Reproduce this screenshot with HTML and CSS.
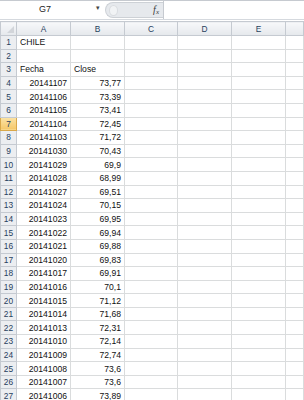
FILE: index.html
```html
<!DOCTYPE html>
<html lang="es">
<head>
    <meta charset="UTF-8">
    <title>Libro1 - CHILE</title>
    <link rel="stylesheet" href="styles.css">
</head>
<body>
    <div class="formula-bar">
        <div class="name-box">
            <span class="cell-ref">G7</span>
            <span class="drop">&#9662;</span>
        </div>
        <div class="fx-zone">
            <span class="grip"></span>
            <span class="fx"><i>f</i><sub>x</sub></span>
        </div>
        <div class="formula-input"></div>
    </div>

    <table class="sheet">
        <colgroup>
            <col class="c-head">
            <col class="c-a">
            <col class="c-b">
            <col class="c-c">
            <col class="c-d">
            <col class="c-e">
            <col>
        </colgroup>
        <thead>
            <tr>
                <th class="corner"><span class="tri"></span></th>
                <th>A</th><th>B</th><th>C</th><th>D</th><th>E</th><th></th>
            </tr>
        </thead>
        <tbody id="rows"></tbody>
    </table>

    <script>
        const data = [
            ['CHILE', ''],
            ['', ''],
            ['Fecha', 'Close'],
            ['20141107', '73,77'],
            ['20141106', '73,39'],
            ['20141105', '73,41'],
            ['20141104', '72,45'],
            ['20141103', '71,72'],
            ['20141030', '70,43'],
            ['20141029', '69,9'],
            ['20141028', '68,99'],
            ['20141027', '69,51'],
            ['20141024', '70,15'],
            ['20141023', '69,95'],
            ['20141022', '69,94'],
            ['20141021', '69,88'],
            ['20141020', '69,83'],
            ['20141017', '69,91'],
            ['20141016', '70,1'],
            ['20141015', '71,12'],
            ['20141014', '71,68'],
            ['20141013', '72,31'],
            ['20141010', '72,14'],
            ['20141009', '72,74'],
            ['20141008', '73,6'],
            ['20141007', '73,6'],
            ['20141006', '73,89']
        ]

        const tbody = document.getElementById('rows')
        data.forEach((row, i) => {
            const tr = document.createElement('tr')
            const num = i + 1
            // numbers go right, text stays left
            const align = v => /^[\d,]+$/.test(v) ? 'num' : 'txt'
            tr.innerHTML =
                `<th class="${num === 7 ? 'active' : ''}">${num}</th>` +
                `<td class="${align(row[0])}">${row[0]}</td>` +
                `<td class="${align(row[1])}">${row[1]}</td>` +
                '<td></td><td></td><td></td><td></td>'
            tbody.appendChild(tr)
        })
    </script>
</body>
</html>
```

FILE: styles.css
```css
body {
    margin: 0;
    font-family: 'Liberation Sans', Arial, sans-serif;
    background: #fff;
    overflow: hidden;
}

/* formula bar */
.formula-bar {
    display: flex;
    height: 18px;
    border-top: 1px solid #c6cad0;
    border-bottom: 1px solid #d5d9de;
    background: #fff;
}
.name-box {
    width: 105px;
    position: relative;
    font-size: 9px;
    color: #222;
}
.cell-ref {
    position: absolute;
    left: 39px;
    top: 3px;
}
.drop {
    position: absolute;
    left: 96px;
    top: 3px;
    font-size: 7px;
    color: #444;
}
.fx-zone {
    width: 58px;
    margin: 1px 0;
    background: #e6e9ed;
    border: 1px solid #cdd1d6;
    border-right: none;
    border-radius: 8px 0 0 8px;
    display: flex;
    align-items: center;
    justify-content: space-between;
    padding: 0 4px 0 3px;
    box-sizing: border-box;
}
.grip {
    width: 9px;
    height: 11px;
    border-radius: 50%;
    background: #f1f3f5;
    border: 1px solid #d9dce0;
    box-sizing: border-box;
}
.fx {
    font-family: 'Liberation Serif', serif;
    font-size: 10px;
    color: #3a3a3a;
    line-height: 1;
}
.fx sub {
    font-size: 7px;
    font-style: italic;
    vertical-align: -1px;
}
.formula-input {
    flex: 1;
    border-left: 1px solid #c6cad0;
}

/* grid */
.sheet {
    border-collapse: collapse;
    table-layout: fixed;
    width: 304px;
    margin-top: 1px;
    font-size: 8.6px;
}
.c-head { width: 16px; }
.c-a { width: 54px; }
.c-b { width: 54px; }
.c-c { width: 53px; }
.c-d { width: 54px; }
.c-e { width: 54px; }

.sheet th,
.sheet td {
    height: 12.6px;
    padding: 0 3px;
    border: 1px solid #dadcdd;
    white-space: nowrap;
    overflow: hidden;
    color: #111;
}
.sheet thead th {
    height: 13px;
    background: linear-gradient(#f7f8fa, #e5e8ec);
    border-color: #c5cad1;
    color: #27415e;
    font-weight: normal;
    text-align: center;
    font-size: 8.4px;
}
.sheet tbody th {
    background: #eceef1;
    border-color: #c5cad1;
    color: #27415e;
    font-weight: normal;
    text-align: center;
    padding: 0;
    font-size: 8.4px;
}
.sheet tbody th.active {
    background: linear-gradient(#fbe3a6, #f6c86a);
    border-color: #d9a84a;
}
.corner {
    position: relative;
}
.tri {
    position: absolute;
    right: 2px;
    bottom: 2px;
    width: 0;
    height: 0;
    border-left: 7px solid transparent;
    border-bottom: 7px solid #d2d5da;
}
.num { text-align: right; }
.txt { text-align: left; }
```
